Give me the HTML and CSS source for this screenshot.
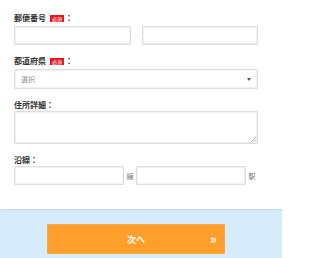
FILE: index.html
```html
<!DOCTYPE html>
<html lang="ja">
<head>
<meta charset="utf-8">
<link rel="stylesheet" href="styles.css">
</head>
<body>
<div class="page">
<div class="form">
  <div class="field f1">
    <div class="label">郵便番号<span class="req">必須</span>：</div>
    <div class="row postal">
      <input class="box" type="text">
      <span class="sep">-</span>
      <input class="box" type="text">
    </div>
  </div>
  <div class="field f2">
    <div class="label">都道府県<span class="req">必須</span>：</div>
    <div class="select box"><span class="ph">選択</span><span class="arrow"></span></div>
  </div>
  <div class="field f3">
    <div class="label">住所詳細：</div>
    <div class="textarea box"><svg class="grip" width="6" height="6" viewBox="0 0 6 6"><path d="M6 1L1 6M6 3.5L3.5 6" stroke="#999" stroke-width="0.8"/></svg></div>
  </div>
  <div class="field f4">
    <div class="label">沿線：</div>
    <div class="row line">
      <input class="box" type="text">
      <span class="unit">線</span>
      <input class="box" type="text">
      <span class="unit">駅</span>
    </div>
  </div>
</div>
<div class="footer">
  <button class="next" type="button"><span class="txt">次へ</span><span class="chev">&raquo;</span></button>
</div>
</div>
</body>
</html>
```
FILE: styles.css
```css
html, body {
  margin: 0;
  padding: 0;
  background: #fff;
  font-family: "Noto Sans CJK JP", "Noto Sans", sans-serif;
}
.page {
  width: 282px;
  overflow: hidden;
}
.form {
  padding: 12px 24px 0 14px;
  height: 209px;
  box-sizing: border-box;
  background: #fff;
}
.label {
  font-size: 8px;
  line-height: 12px;
  height: 12px;
  font-weight: bold;
  color: #333;
  display: flex;
  align-items: center;
}
.req {
  display: inline-block;
  background: #e8161e;
  color: #fff;
  font-size: 5px;
  line-height: 7px;
  height: 7px;
  padding: 0 2px;
  margin-left: 4px;
  margin-right: 1px;
  font-weight: normal;
}
.box {
  box-sizing: border-box;
  border: 1px solid #dedede;
  box-shadow: inset 0 0 0 1px #f2f2f2;
  background: #fff;
  border-radius: 1px;
  margin: 0;
  padding: 0;
  outline: none;
  font: inherit;
}
.f1 .label { margin-bottom: 2px; }
.f1 { margin-bottom: 10px; }
.f2 .label { margin-bottom: 2px; }
.f2 { margin-bottom: 10px; }
.f3 .label { margin-bottom: 0px; }
.f3 { margin-bottom: 10px; }
.f4 .label { margin-bottom: 0px; }
.row {
  display: flex;
  align-items: center;
}
.row .box {
  height: 19px;
  min-width: 0;
}
.postal .box { flex: 1; }
.postal .sep {
  width: 11px;
  text-align: center;
  font-size: 6px;
  color: #aaa;
}
.line .box { width: 110px; }
.line .unit {
  font-size: 7px;
  color: #777;
  width: 12px;
  text-align: center;
}
.select {
  height: 20px;
  display: flex;
  align-items: center;
  justify-content: space-between;
  padding: 0 6px 0 6px;
}
.ph {
  font-size: 7px;
  color: #999;
}
.arrow {
  width: 0;
  height: 0;
  border-left: 2.5px solid transparent;
  border-right: 2.5px solid transparent;
  border-top: 3px solid #555;
}
.textarea {
  height: 33px;
  position: relative;
}
.grip {
  position: absolute;
  right: 1px;
  bottom: 1px;
}
.footer {
  height: 49px;
  background: #d6ecfb;
  box-shadow: inset 0 2px 2px -1px rgba(0,0,0,0.08);
  padding-top: 15px;
  box-sizing: border-box;
}
.next {
  display: flex;
  align-items: center;
  justify-content: center;
  position: relative;
  margin: 0 0 0 47px;
  width: 178px;
  height: 30px;
  background: #ff9f2b;
  border: 1px solid #f7a64a;
  border-radius: 1px;
  color: #fff;
  font-family: inherit;
  padding: 0;
}
.txt {
  font-size: 9px;
  font-weight: bold;
}
.chev {
  position: absolute;
  right: 7px;
  top: 50%;
  transform: translateY(-55%);
  font-size: 13px;
  font-weight: bold;
  line-height: 1;
}
```
